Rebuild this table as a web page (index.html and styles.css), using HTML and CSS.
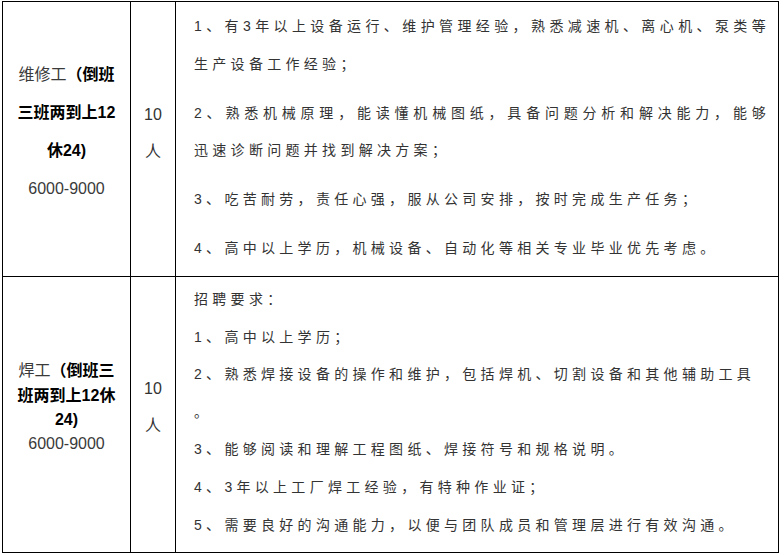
FILE: index.html
```html
<!DOCTYPE html>
<html lang="zh-CN">
<head>
<meta charset="utf-8">
<title>招聘岗位</title>
<link rel="stylesheet" href="styles.css">
</head>
<body>
<div class="sheet">
  <div class="cell job job-a">
    <div class="job-text"><span class="thin">维修工</span><b>（倒班</b><br><b>三班两到上12</b><br><b>休24)</b><br><span class="thin">6000-9000</span></div>
  </div>
  <div class="cell count count-a"><div>10<br>人</div></div>
  <div class="cell req req-a">
    <p class="para"><span class="ln jl">1、有3年以上设备运行、维护管理经验，熟悉减速机、离心机、泵类等</span><span class="ln">生产设备工作经验；</span></p>
    <p class="para"><span class="ln jl">2、熟悉机械原理，能读懂机械图纸，具备问题分析和解决能力，能够</span><span class="ln">迅速诊断问题并找到解决方案；</span></p>
    <p class="para"><span class="ln">3、吃苦耐劳，责任心强，服从公司安排，按时完成生产任务；</span></p>
    <p class="para"><span class="ln">4、高中以上学历，机械设备、自动化等相关专业毕业优先考虑。</span></p>
  </div>

  <div class="cell job job-b">
    <div class="job-text"><span class="thin">焊工</span><b>（倒班三</b><br><b>班两到上12休</b><br><b>24)</b><br><span class="thin">6000-9000</span></div>
  </div>
  <div class="cell count count-b"><div>10<br>人</div></div>
  <div class="cell req req-b">
    <span class="ln">招聘要求：</span>
    <span class="ln">1、高中以上学历；</span>
    <span class="ln">2、熟悉焊接设备的操作和维护，包括焊机、切割设备和其他辅助工具</span>
    <span class="ln">。</span>
    <span class="ln">3、能够阅读和理解工程图纸、焊接符号和规格说明。</span>
    <span class="ln">4、3年以上工厂焊工经验，有特种作业证；</span>
    <span class="ln">5、需要良好的沟通能力，以便与团队成员和管理层进行有效沟通。</span>
  </div>
</div>
</body>
</html>
```

FILE: styles.css
```css
html, body {
  margin: 0;
  padding: 0;
  background: #ffffff;
}

body {
  font-family: "Liberation Sans", "Noto Sans CJK SC", sans-serif;
  color: #333333;
}

.sheet {
  margin: 1px 0 0 2px;
  width: 777px;
  box-sizing: border-box;
  padding: 1px;
  gap: 1px;
  background: #000000;
  display: grid;
  grid-template-columns: 127px 44px 602px;
  grid-template-rows: 274px 275px;
}

.cell {
  background: #ffffff;
  box-sizing: border-box;
}

.job {
  display: flex;
  align-items: center;
  justify-content: center;
  padding-bottom: 14px;
  font-size: 16px;
  text-align: center;
}

.job-a { line-height: 38px; }
.job-b { line-height: 24.4px; padding-bottom: 13px; }

.job-text b {
  font-weight: bold;
  color: #000000;
}

.thin {
  color: #3a3a3a;
}

.count {
  display: flex;
  align-items: center;
  justify-content: center;
  font-size: 16px;
  line-height: 37px;
  text-align: center;
  color: #333333;
}

.count-a { padding-bottom: 13px; }
.count-b { padding-bottom: 15px; }

.req {
  font-size: 14px;
  letter-spacing: 4.3px;
  line-height: 37.6px;
  padding: 6px 8px 0 18px;
  color: #333333;
}

.req-b {
  padding-top: 4px;
}

.para {
  margin: 0 0 11.5px 0;
}

.ln {
  display: block;
  white-space: nowrap;
}

.jl {
  text-align: justify;
  text-align-last: justify;
}
```
